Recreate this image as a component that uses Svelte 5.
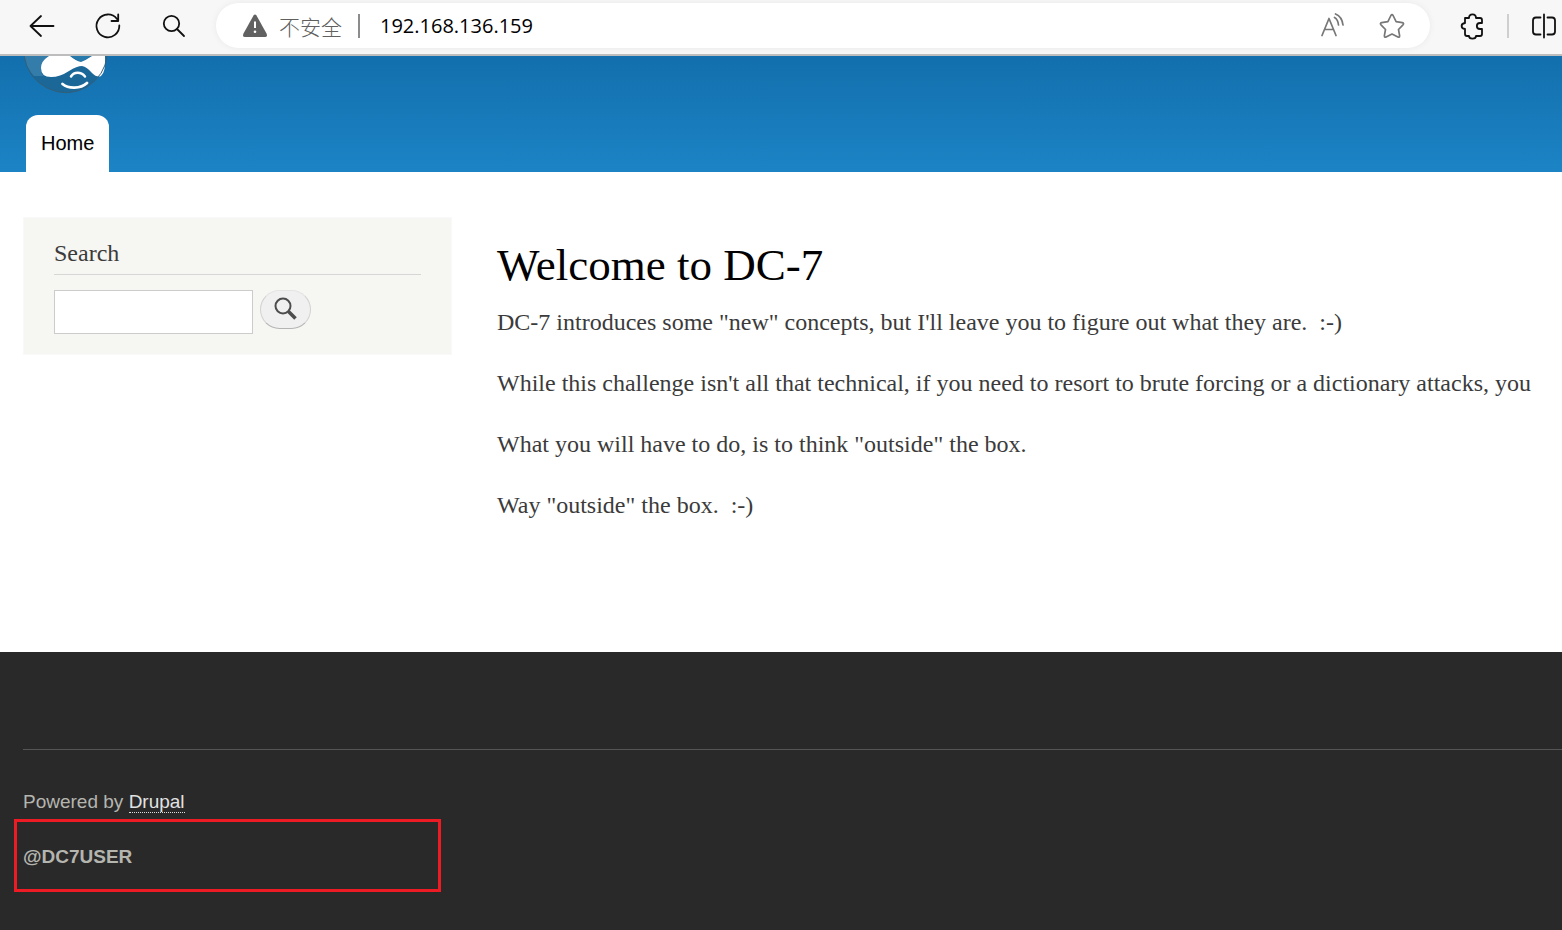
<script>
  const paragraphs = [
    'DC-7 introduces some "new" concepts, but I\'ll leave you to figure out what they are.\u00a0 :-)',
    'While this challenge isn\'t all that technical, if you need to resort to brute forcing or a dictionary attacks, you',
    'What you will have to do, is to think "outside" the box.',
    'Way "outside" the box.\u00a0 :-)'
  ];
  let address = $state('192.168.136.159');
  let query = $state('');
</script>

<div class="window">
  <div class="toolbar">
    <nav class="actions" aria-label="Browser">
      <button class="tool" aria-label="Back">
        <svg width="28" height="28" viewBox="0 0 28 28"><path d="M25.500 14H2.500M13 4L2.500 14 13 24" /></svg>
      </button>
      <button class="tool" aria-label="Refresh">
        <svg width="28" height="28" viewBox="0 0 28 28"><path d="M25.300 13.500A11.400 11.400 0 1 1 23 7M24.200 2.500V9h-6.700" /></svg>
      </button>
      <button class="tool" aria-label="Search">
        <svg width="28" height="28" viewBox="0 0 28 28"><circle cx="11.500" cy="11.500" r="7.700" /><path d="M17 17l7 7" /></svg>
      </button>
    </nav>
    <div class="address">
      <svg class="warning" width="26" height="26" viewBox="0 0 26 26">
        <path d="M11.500 2.600q1.500-2.400 3 0l10 18q1.400 3.400-1.500 3.400H3q-2.900 0-1.500-3.400z" fill="#616161" />
        <path d="M13 8.500v6.500" stroke="#fff" stroke-width="2" />
        <circle cx="13" cy="18.800" r="1.300" fill="#fff" />
      </svg>
      <span class="insecure">不安全</span>
      <span class="bar"></span>
      <input class="url" aria-label="Address" bind:value={address} />
      <button class="tool muted" aria-label="Read aloud">
        <svg width="28" height="28" viewBox="0 0 28 28"><path d="M4 23.500L11 6.500l7 17M6.800 17.500h8.500M16.500 5.500Q20 7.500 20.500 13M17.500 2Q24 4.500 25 13" /></svg>
      </button>
      <button class="tool muted" aria-label="Add to favourites">
        <svg width="28" height="28" viewBox="0 0 28 28"><path d="M12.900 3.500q1.100-1.700 2.200 0l3 6.200 6.200 1q2.100.500.700 2.100L20.500 17.500l1.100 6.200q.1 2-1.700 1.300L14 22l-5.900 3q-1.800.7-1.700-1.300l1.100-6.200-4.500-4.700q-1.400-1.600.7-2.100l6.200-1z" /></svg>
      </button>
    </div>
    <div class="extras">
      <button class="tool" aria-label="Extensions">
        <svg width="28" height="28" viewBox="0 0 28 28"><path d="M7 6h4c0-4.800 7-4.800 7 0h4q2 0 2 2v3h-2c-4.200 0-4.200 6 0 6h2v5q0 2-2 2h-4c0 3.500-7 3.500-7 0H9q-2 0-2-2v-5c-4.500-.5-4.500-5.500 0-6z" /></svg>
      </button>
      <span class="rule"></span>
      <button class="tool" aria-label="Split screen">
        <svg width="28" height="28" viewBox="0 0 28 28"><path d="M10.500 5.500H6Q3 5.500 3 8.500v11q0 3 3 3h4.500M17.500 5.500H22q3 0 3 3v11q0 3-3 3h-4.500M14 2.500v23" /></svg>
      </button>
    </div>
  </div>

  <header class="banner">
    <a class="logo" href="#home" aria-label="Site home">
      <svg width="84" height="40" viewBox="0 0 84 40">
        <path d="M0 0h83q-2 19-20 31-20 11-40 1Q4 22 0 0z" fill="#1b6798" />
        <path d="M0 0h31Q17 5 17 14q0 4 3 6H10Q2 12 0 0z" fill="#347daa" />
        <path d="M46 0h21L57 6z" fill="#277aac" />
        <path d="M25 0Q17 5 17 12q0 9 10 9 9 0 18-6 8-5 13-5 5 1 10 7 5 5 9 3 5-4 4-20H68Q62 4 57 6q-5-1-11-6z" fill="#fff" />
        <path d="M47 20.500c3-5 10-5 14 0" fill="none" stroke="#fff" stroke-width="2.500" stroke-linecap="round" />
        <path d="M38.500 28c6 5 18 5 24.500-1" fill="none" stroke="#fff" stroke-width="2.800" stroke-linecap="round" />
        <path d="M0 0q4 22 23 32 20 10 40-1Q81 19 83 0" fill="none" stroke="#335f79" stroke-width="1" />
      </svg>
    </a>
    <nav><a class="tab" href="#home">Home</a></nav>
  </header>

  <main class="content">
    <aside class="search">
      <h2><label for="query">Search</label></h2>
      <form onsubmit={(event) => event.preventDefault()}>
        <input id="query" type="search" bind:value={query} />
        <button class="submit" aria-label="Search">
          <svg width="24" height="24" viewBox="0 0 24 24" stroke="#4d4d4d"><circle cx="9" cy="9" r="7.500" stroke-width="2" /><path d="M14.500 14.500l7 7" stroke-width="3.500" /></svg>
        </button>
      </form>
    </aside>
    <article>
      <h1>Welcome to DC-7</h1>
      {#each paragraphs as text}
        <p>{text}</p>
      {/each}
    </article>
  </main>

  <footer>
    <div class="credits">
      <p class="powered">Powered by <a href="#drupal">Drupal</a></p>
      <p class="user">@DC7USER</p>
    </div>
  </footer>
</div>

<style>
  :global(body) { margin: 0; }
  * { box-sizing: border-box; }
  .window {
    display: flex;
    flex-direction: column;
    min-height: 100vh;
    overflow: hidden;
    background: #fff;
    color: #3b3b3b;
    font-family: "Liberation Sans", Arial, sans-serif;
  }
  svg { display: block; flex: none; }
  button { padding: 0; border: 0; background: none; }
  .toolbar {
    display: flex;
    align-items: center;
    height: 56px;
    padding: 0 4px 3px 28px;
    border-bottom: 2px solid #bdbdbd;
    background: #f7f7f7;
  }
  .actions { display: flex; gap: 38px; margin-right: 28px; }
  .tool svg { fill: none; stroke: #111; stroke-width: 1.8; stroke-linecap: round; stroke-linejoin: round; }
  .muted svg { stroke: #777; stroke-width: 1.7; }
  .address {
    display: flex;
    flex: 1;
    align-items: center;
    height: 45px;
    padding: 0 24px 0 26px;
    border-radius: 23px;
    background: #fff;
    box-shadow: 0 0 6px #e9e9e9;
  }
  .insecure {
    margin: 0 16px 0 11px;
    color: #606060;
    font: 300 21px/28px "Noto Sans CJK SC", sans-serif;
  }
  .bar { width: 2px; height: 24px; background: #8c8c8c; }
  .url {
    flex: 1;
    min-width: 0;
    margin-left: 20px;
    padding: 0;
    border: 0;
    outline: 0;
    background: none;
    color: #000;
    font: 20px/28px "Open Sans", sans-serif;
  }
  .address .tool + .tool { margin-left: 32px; }
  .extras { display: flex; align-items: center; gap: 21px; margin-left: 28px; }
  .rule { width: 2px; height: 24px; background: #cfcfcf; }

  .banner {
    display: flex;
    flex-direction: column;
    align-items: flex-start;
    padding: 0 24px;
    background: linear-gradient(#136fad, #1c84c5);
  }
  .logo { height: 59px; }
  .tab {
    display: block;
    margin-left: 2px;
    padding: 14px 15px 15px;
    border-radius: 12px 12px 0 0;
    background: #fff;
    color: #000;
    font-size: 20px;
    line-height: 28px;
    text-decoration: none;
    text-shadow: 0 1px #eee;
  }

  .content {
    display: grid;
    grid-template-columns: 429px minmax(0, 1fr);
    align-items: start;
    gap: 45px;
    padding: 45px 0 103px 23px;
    font-family: "Liberation Serif", serif;
  }
  .search { padding: 20px 30px; border: 1px solid #f9f9f9; background: #f6f6f2; }
  h2 {
    margin: 0 0 15px;
    padding-bottom: 6px;
    border-bottom: 1px solid #d6d6d6;
    font-size: 24px;
    font-weight: 400;
    line-height: 30px;
  }
  form { display: flex; align-items: flex-start; gap: 7px; }
  #query {
    width: 199px;
    height: 44px;
    padding: 8px;
    border: 1px solid #ccc;
    outline: 0;
    background: #fff;
    font: 20px/26px "Liberation Sans", sans-serif;
    appearance: none;
  }
  .submit {
    display: grid;
    place-items: center;
    width: 51px;
    height: 39px;
    padding-bottom: 2px;
    border: 1px solid;
    border-color: #e4e4e4 #d2d2d2 #b4b4b4;
    border-radius: 20px;
    background: #f0f0f0;
  }
  .submit svg { fill: none; }
  article { padding-top: 20px; white-space: nowrap; }
  h1 { margin: 0 0 12px; color: #000; font-size: 45px; font-weight: 400; line-height: 56px; }
  article p { margin: 0 0 27px; font-size: 24px; line-height: 34px; }

  footer {
    flex: 1;
    padding: 97px 0 38px 23px;
    background: #292929;
    color: #b5b5b0;
    font-size: 19px;
    line-height: 26px;
  }
  .credits { padding-top: 39px; border-top: 1px solid #555; }
  .powered { margin: 0; }
  .powered a { border-bottom: 1px dotted #ddd; color: #e2e2e2; text-decoration: none; }
  .user {
    width: 427px;
    margin: 4px 0 0 -9px;
    padding: 22px 6px 19px;
    border: 3px solid #ed1c24;
    font-weight: 700;
  }
</style>
